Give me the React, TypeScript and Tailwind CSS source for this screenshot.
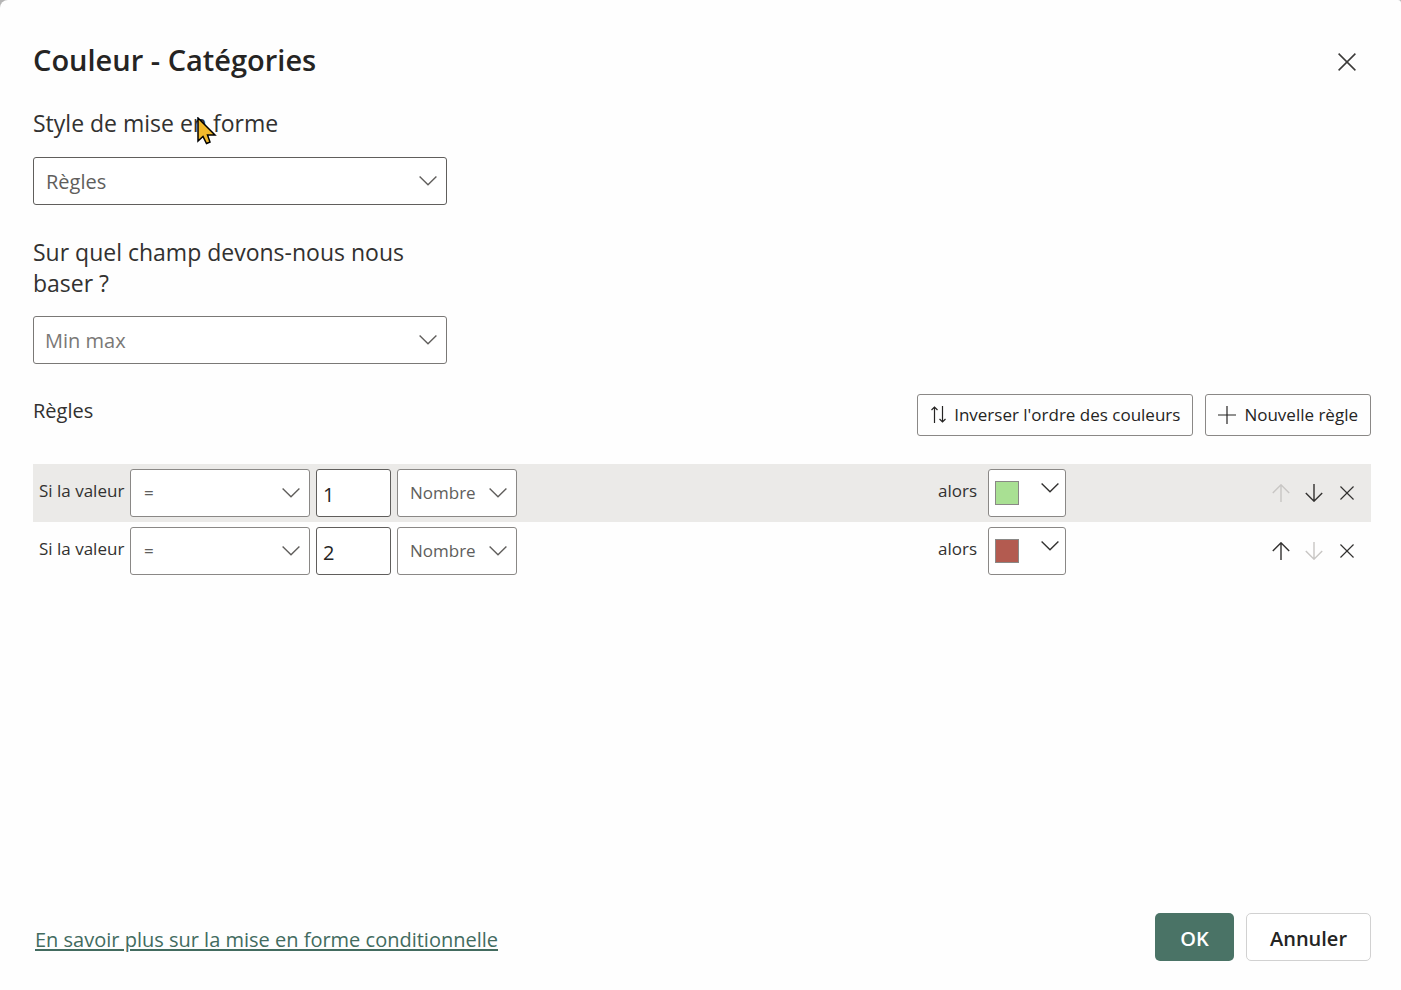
import React, { useState } from 'react';

interface Rule {
  id: number;
  operator: string;
  value: string;
  unit: string;
  color: string;
}

interface SelectProps {
  id: string;
  value: string;
  options: string[];
  onChange: (value: string) => void;
  label?: string;
  className: string;
}

const ChevronIcon: React.FC<{ className?: string }> = ({ className = '' }) => (
  <svg className={className} width="18" height="10" viewBox="0 0 18 10" fill="none" stroke="currentColor" strokeWidth="1.4">
    <path d="M0.6 0.6 9 8.8 17.4 0.6" />
  </svg>
);

const CloseIcon: React.FC<{ size: number }> = ({ size }) => (
  <svg width={size} height={size} viewBox="0 0 18 18" fill="none" stroke="currentColor" strokeWidth="1.5">
    <path d="M0.6 0.6 17.4 17.4M17.4 0.6 0.6 17.4" />
  </svg>
);

const ArrowUpIcon: React.FC = () => (
  <svg width="18" height="18" viewBox="0 0 18 18" fill="none" stroke="currentColor" strokeWidth="1.4">
    <path d="M9 18V0.8M0.8 9 9 0.8 17.2 9" />
  </svg>
);

const ArrowDownIcon: React.FC = () => (
  <svg width="18" height="18" viewBox="0 0 18 18" fill="none" stroke="currentColor" strokeWidth="1.4">
    <path d="M9 0V17.2M0.8 9 9 17.2 17.2 9" />
  </svg>
);

const SwapIcon: React.FC = () => (
  <svg width="16" height="18" viewBox="0 0 16 18" fill="none" stroke="currentColor" strokeWidth="1.2">
    <path d="M4.5 17V1M1.5 4 4.5 1 7.5 4M12.5 0V16M9.5 13 12.5 16 15.5 13" />
  </svg>
);

const PlusIcon: React.FC = () => (
  <svg width="18" height="18" viewBox="0 0 18 18" fill="none" stroke="currentColor" strokeWidth="1.2">
    <path d="M9 0V18M0 9H18" />
  </svg>
);

// Native select with its own arrow laid over it
const Select: React.FC<SelectProps> = ({ id, value, options, onChange, label, className }) => (
  <div className="relative">
    <select
      id={id}
      aria-label={label}
      value={value}
      onChange={(e) => onChange(e.target.value)}
      className={`block h-12 appearance-none rounded-[3px] border bg-white pr-8 outline-none ${className}`}
    >
      {options.map((option) => (
        <option key={option} value={option}>{option}</option>
      ))}
    </select>
    <ChevronIcon className="pointer-events-none absolute right-[10px] top-[19px] text-[#605e5c]" />
  </div>
);

const App: React.FC = () => {
  const [style, setStyle] = useState('Règles');
  const [field, setField] = useState('Min max');
  const [rules, setRules] = useState<Rule[]>([
    { id: 1, operator: '=', value: '1', unit: 'Nombre', color: '#a9e093' },
    { id: 2, operator: '=', value: '2', unit: 'Nombre', color: '#b35b50' },
  ]);

  const updateRule = (id: number, changes: Partial<Rule>) => {
    setRules(rules.map((rule) => (rule.id === id ? { ...rule, ...changes } : rule)));
  };

  const moveRule = (index: number, step: number) => {
    const next = [...rules];
    [next[index], next[index + step]] = [next[index + step], next[index]];
    setRules(next);
  };

  const reverseColors = () => {
    const colors = rules.map((rule) => rule.color).reverse();
    setRules(rules.map((rule, i) => ({ ...rule, color: colors[i] })));
  };

  const addRule = () => {
    setRules([...rules, { id: Date.now(), operator: '=', value: '', unit: 'Nombre', color: '#a9e093' }]);
  };

  return (
    <div className="min-h-screen bg-[#b5b5b5] font-['Segoe_UI','Open_Sans',sans-serif] text-[#323130]">
      <div role="dialog" aria-labelledby="title" className="flex min-h-screen flex-col rounded-tl-lg rounded-tr-[3px] bg-[#fefefe] pb-[29px] pl-[33px] pr-[30px] pt-10">
        <header className="flex items-end justify-between pr-[15px]">
          <h1 id="title" className="text-[29px] font-semibold leading-10 text-[#252423]">Couleur - Catégories</h1>
          <button type="button" aria-label="Fermer" className="pb-[9px] text-[#3b3a39]">
            <CloseIcon size={18} />
          </button>
        </header>

        <div className="mt-7 w-[414px]">
          <div className="relative">
            <label htmlFor="style" className="block text-[23px] leading-[31px]">Style de mise en forme</label>
            <svg className="pointer-events-none absolute left-[164px] top-[9px]" width="20" height="28" viewBox="0 0 20 28">
              <path d="M1 1V24L6 19.5 9.5 26.5 13 25 10.5 18H18Z" fill="#f2b92c" stroke="#000" strokeWidth="1.5" />
            </svg>
          </div>
          <div className="mt-[18px]">
            <Select
              id="style"
              value={style}
              options={['Dégradé', 'Règles', 'Valeur de champ']}
              onChange={setStyle}
              className="w-full border-[#605e5c] pl-3 pt-[2px] text-[20px] text-[#605e5c]"
            />
          </div>

          <label htmlFor="field" className="mt-8 block text-[23px] leading-[31px]">
            Sur quel champ devons-nous nous baser ?
          </label>
          <div className="mt-[17px]">
            <Select
              id="field"
              value={field}
              options={['Min max']}
              onChange={setField}
              className="w-full border-[#7a7876] pl-[11px] pt-[2px] text-[20px] text-[#7a7876]"
            />
          </div>
        </div>

        <div className="mt-[30px] flex items-start justify-between">
          <h2 className="text-[20px] leading-[34px]">Règles</h2>
          <div className="flex gap-3 text-[17px] text-[#252423]">
            <button type="button" onClick={reverseColors} className="flex h-[42px] items-center gap-2 rounded-[3px] border border-[#8a8886] px-3">
              <SwapIcon />
              Inverser l'ordre des couleurs
            </button>
            <button type="button" onClick={addRule} className="flex h-[42px] items-center gap-2 rounded-[3px] border border-[#8a8886] px-3">
              <PlusIcon />
              Nouvelle règle
            </button>
          </div>
        </div>

        <ul className="mt-7">
          {rules.map((rule, index) => (
            <li key={rule.id} className="flex items-center py-[5px] pl-[6px] text-[17px] odd:bg-[#ebeae8]">
              <div className="flex flex-1 gap-[6px]">
                <label htmlFor={`operator-${rule.id}`} className="w-[85px] whitespace-nowrap pt-2 leading-7">Si la valeur</label>
                <Select
                  id={`operator-${rule.id}`}
                  value={rule.operator}
                  options={['=', '>', '>=', '<', '<=']}
                  onChange={(operator) => updateRule(rule.id, { operator })}
                  className="w-[180px] border-[#8a8886] pl-[13px] text-[#605e5c]"
                />
                <input
                  type="text"
                  aria-label="Valeur"
                  value={rule.value}
                  onChange={(e) => updateRule(rule.id, { value: e.target.value })}
                  className="h-12 w-[75px] rounded-[3px] border border-[#605e5c] bg-white px-[6px] pt-[2px] text-[20px] text-[#252423] outline-none"
                />
                <Select
                  id={`unit-${rule.id}`}
                  label="Unité"
                  value={rule.unit}
                  options={['Nombre', 'Pourcentage']}
                  onChange={(unit) => updateRule(rule.id, { unit })}
                  className="w-[120px] border-[#8a8886] pl-3 text-[#605e5c]"
                />
              </div>
              <div className="flex w-[433px] justify-between pr-[15px]">
                <div className="flex gap-3">
                  <span className="w-[38px] whitespace-nowrap pt-2 leading-7">alors</span>
                  <button
                    type="button"
                    aria-label="Couleur"
                    className="flex h-12 w-[78px] items-start justify-between rounded-[3px] border border-[#8a8886] bg-white pl-[6px] pr-[6px] pt-[11px]"
                  >
                    <span className="size-6 border border-[#8a8886]" style={{ backgroundColor: rule.color }} />
                    <ChevronIcon className="mt-[2px]" />
                  </button>
                </div>
                <div className="flex items-center gap-[15px]">
                  <button type="button" aria-label="Monter" disabled={index === 0} onClick={() => moveRule(index, -1)} className="disabled:text-[#c8c6c4]">
                    <ArrowUpIcon />
                  </button>
                  <button type="button" aria-label="Descendre" disabled={index === rules.length - 1} onClick={() => moveRule(index, 1)} className="disabled:text-[#c8c6c4]">
                    <ArrowDownIcon />
                  </button>
                  <button
                    type="button"
                    aria-label="Supprimer"
                    onClick={() => setRules(rules.filter((r) => r.id !== rule.id))}
                    className="flex w-[18px] justify-center"
                  >
                    <CloseIcon size={14} />
                  </button>
                </div>
              </div>
            </li>
          ))}
        </ul>

        <footer className="mt-auto flex items-center justify-between">
          <a href="#" className="ml-[2px] mt-[6px] text-[20px] text-[#426b5f] underline decoration-2 underline-offset-2">
            En savoir plus sur la mise en forme conditionnelle
          </a>
          <div className="flex gap-3 text-[20px] font-semibold">
            <button type="button" className="h-12 w-[79px] rounded-[5px] bg-[#4a7366] pt-[3px] text-white">OK</button>
            <button type="button" className="h-12 w-[125px] rounded-[5px] border border-[#d1d1d1] bg-white pt-[3px] text-[#252423]">Annuler</button>
          </div>
        </footer>
      </div>
    </div>
  );
};

export default App;
